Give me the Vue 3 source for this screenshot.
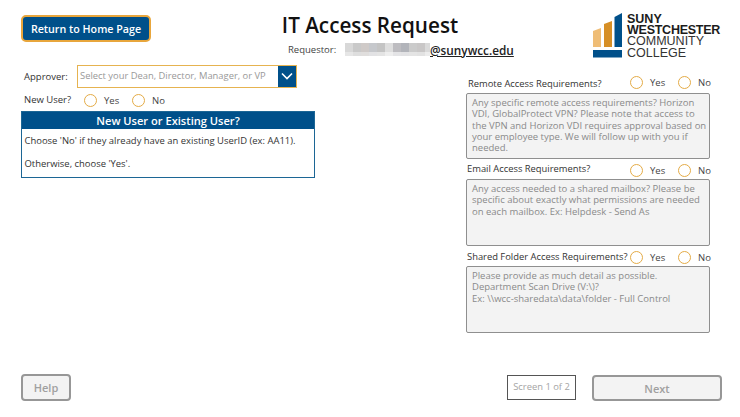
<script setup>
const blur = [
  ['#d8d8d8', 8], ['#c9c9c9', 8], ['#cfcac8', 8], ['#c6c8cc', 8], ['#c4c4c4', 8], ['#dedede', 8],
  ['#bdbcc0', 8], ['#b2b4ba', 8], ['#cbcbcb', 8], ['#c9c7c7', 8], ['#dadada', 5]
]
const blur2 = ['#e6e6e6', '#dedede', '#e0dedd', '#e2e2e4', '#e4e4e4', '#eeeeee', '#e4e4e6', '#e2e2e4', '#e4e4e4', '#e2e2e2', '#ececec']
const fields = [
  { label: 'Remote Access Requirements?', cls: 'f1', text: 'Any specific remote access requirements? Horizon VDI, GlobalProtect VPN? Please note that access to the VPN and Horizon VDI requires approval based on your employee type. We will follow up with you if needed.' },
  { label: 'Email Access Requirements?', cls: 'f2', text: 'Any access needed to a shared mailbox? Please be specific about exactly what permissions are needed on each mailbox. Ex: Helpdesk - Send As' },
  { label: 'Shared Folder Access Requirements?', cls: 'f3', text: 'Please provide as much detail as possible.\nDepartment Scan Drive (V:\\)?\nEx: \\\\wcc-sharedata\\data\\folder - Full Control' }
]
</script>

<template>
  <div class="page">
    <header class="header">
      <div class="head-left">
        <button class="home">Return to Home Page</button>
      </div>
      <div class="head-mid">
        <h1>IT Access Request</h1>
        <div class="req">
          <span class="req-label">Requestor:</span>
          <span class="pixels">
            <span class="px-row"><i v-for="(b, i) in blur" :key="i" :style="{ background: b[0], width: b[1] + 'px' }"></i></span>
            <span class="px-row low"><i v-for="(c, i) in blur2" :key="i" :style="{ background: c, width: blur[i][1] + 'px' }"></i></span>
          </span>
          <span class="email">@sunywcc.edu</span>
        </div>
      </div>
      <div class="head-right">
        <div class="logo">
          <svg width="29" height="45" viewBox="0 0 29 45">
            <polygon points="0,18 8,15 8,34 0,34" fill="#efbd76" />
            <polygon points="11,11 19,8 19,34 11,34" fill="#d68f26" />
            <polygon points="21.5,4 29,0 29,34 21.5,34" fill="#00508a" />
            <rect x="0" y="37" width="29" height="7.5" fill="#00508a" />
          </svg>
          <div class="logo-text">
            <span class="lb">SUNY</span>
            <span class="lb west">WESTCHESTER</span>
            <span class="ll">COMMUNITY</span>
            <span class="ll">COLLEGE</span>
          </div>
        </div>
      </div>
    </header>

    <main class="main">
      <section class="left">
        <div class="approver">
          <span class="approver-label">Approver:</span>
          <div class="select">
            <span class="select-text">Select your Dean, Director, Manager, or VP</span>
            <span class="select-btn">
              <svg width="14" height="9" viewBox="0 0 14 9"><path d="M2 1.5 L7 6.5 L12 1.5" fill="none" stroke="#fff" stroke-width="1.6" /></svg>
            </span>
          </div>
        </div>
        <div class="newuser">
          <span class="newuser-label">New User?</span>
          <span class="radio"></span><span class="opt yes">Yes</span>
          <span class="radio"></span><span class="opt">No</span>
        </div>
        <div class="panel">
          <div class="panel-head">New User or Existing User?</div>
          <div class="panel-body">
            <p>Choose 'No' if they already have an existing UserID (ex: AA11).</p>
            <p>Otherwise, choose 'Yes'.</p>
          </div>
        </div>
      </section>

      <section class="right">
        <div v-for="f in fields" :key="f.label" class="field" :class="f.cls">
          <div class="field-row">
            <span class="field-label">{{ f.label }}</span>
            <span class="field-radios">
              <span class="radio"></span><span class="opt yes-r">Yes</span>
              <span class="radio"></span><span class="opt">No</span>
            </span>
          </div>
          <div class="area">{{ f.text }}</div>
        </div>
      </section>
    </main>

    <footer class="footer">
      <button class="ghost help">Help</button>
      <div class="foot-right">
        <div class="screen">Screen 1 of 2</div>
        <button class="ghost next">Next</button>
      </div>
    </footer>
  </div>
</template>

<style>
html, body { margin: 0; background: #fff; }
</style>

<style scoped>
.page {
  width: 740px;
  height: 417px;
  display: flex;
  flex-direction: column;
  overflow: hidden;
  font-family: "Open Sans", "Noto Sans", sans-serif;
  color: #333;
  background: #fff;
}
.header {
  display: grid;
  grid-template-columns: 1fr 290px 1fr;
  height: 65px;
  box-sizing: border-box;
  padding: 13px 19px 0 21px;
  flex: none;
}
.home {
  width: 130px;
  height: 27px;
  margin-top: 2px;
  box-sizing: border-box;
  border: 2px solid #e8a63c;
  border-radius: 5px;
  background: #00508a;
  color: #fff;
  font: 600 10.7px "Open Sans", sans-serif;
  padding: 1px 0 0;
}
.head-mid { display: flex; flex-direction: column; align-items: center; }
h1 {
  margin: 0 2px 0 0;
  font-size: 20.7px;
  line-height: 24px;
  font-weight: 600;
  color: #111;
  white-space: nowrap;
}
.req {
  display: flex;
  align-items: center;
  height: 17px;
  margin-top: 4px;
  align-self: flex-start;
  margin-left: 62px;
}
.req-label { font-size: 9.5px; width: 57px; color: #444; flex: none; }
.pixels { display: flex; flex-direction: column; width: 85px; flex: none; }
.px-row { display: flex; height: 9px; }
.px-row.low { height: 4px; }
.px-row i { display: block; flex: none; }
.email {
  font-size: 11.8px;
  font-weight: 600;
  color: #222;
  text-decoration: underline;
  white-space: nowrap;
}
.head-right { display: flex; justify-content: flex-end; }
.logo { display: flex; gap: 5px; align-items: flex-start; height: 45px; }
.logo-text {
  display: flex;
  flex-direction: column;
  margin-top: 0.5px;
  font-family: "Liberation Sans", sans-serif;
  font-size: 12.5px;
  line-height: 11.4px;
  width: 94px;
  white-space: nowrap;
}
.lb { font-weight: 700; color: #1c1c1c; }
.west { letter-spacing: -0.25px; }
.ll { font-weight: 400; color: #333; }

.main {
  flex: 1;
  display: flex;
  justify-content: space-between;
  padding: 0 30px 0 21px;
  min-height: 0;
}
.left { width: 294px; }
.approver { display: flex; align-items: center; height: 23px; }
.approver-label { width: 56px; padding-left: 3px; box-sizing: border-box; font-size: 9.5px; color: #333; }
.select {
  width: 220px;
  height: 23px;
  box-sizing: border-box;
  border: 1.5px solid #e6b350;
  display: flex;
  align-items: stretch;
  background: #fff;
}
.select-text { flex: 1; padding-left: 2px; font-size: 9.4px; line-height: 20px; color: #999; white-space: nowrap; }
.select-btn {
  width: 18px;
  background: #00508a;
  display: flex;
  align-items: center;
  justify-content: center;
}
.newuser { display: flex; align-items: center; height: 14px; margin-top: 5px; padding-left: 3px; }
.newuser-label { width: 60px; font-size: 9.5px; position: relative; top: -1px; }
.radio {
  flex: none;
  width: 13px;
  height: 13px;
  box-sizing: border-box;
  border: 1.3px solid #e4ab46;
  border-radius: 50%;
  background: #fff;
}
.opt { font-size: 9.5px; color: #444; margin-left: 7px; }
.yes { width: 28px; }
.panel {
  margin-top: 4px;
  width: 294px;
  height: 67px;
  box-sizing: border-box;
  border: 1px solid #1c6695;
  background: #fff;
}
.panel-head {
  height: 17px;
  background: #00508a;
  color: #fff;
  text-align: center;
  font-size: 11.1px;
  font-weight: 600;
  line-height: 17px;
}
.panel-body { padding: 5px 2.5px; font-size: 9.45px; color: #333; }
.panel-body p { margin: 0 0 10px; line-height: 13px; white-space: nowrap; }

.right { width: 244px; display: flex; flex-direction: column; margin-top: 11px; }
.field { display: flex; flex-direction: column; }
.field-row { display: flex; height: 17px; align-items: center; position: relative; padding-left: 1px; }
.f1 .field-row { padding-left: 2px; }
.f1 .field-label { position: relative; top: -1px; }
.f2 .field-label { position: relative; top: -2px; }
.f3 .field-label { position: relative; top: -1px; }
.field-label { font-size: 9.4px; color: #333; white-space: nowrap; }
.field-radios {
  position: absolute;
  left: 164px;
  top: 0;
  display: flex;
  align-items: center;
  height: 13px;
}
.f2 .field-radios, .f3 .field-radios { top: 2px; }
.yes-r { width: 28px; }
.f1 .area { height: 66px; }
.area {
  width: 244px;
  height: 67px;
  box-sizing: border-box;
  border: 1.5px solid #8f8f8f;
  border-radius: 2px;
  background: #f3f3f3;
  padding: 3px 1px 3px 5px;
  font-size: 9.5px;
  line-height: 11.25px;
  color: #8a8a8a;
  white-space: pre-line;
}
.f2, .f3 { margin-top: 3px; }

.footer {
  flex: none;
  display: flex;
  justify-content: space-between;
  align-items: flex-start;
  height: 42px;
  box-sizing: border-box;
  padding: 0 18px 0 21px;
}
.foot-right { display: flex; gap: 16px; }
.ghost {
  box-sizing: border-box;
  height: 26px;
  border: 2px solid #979797;
  border-radius: 4px;
  background: #f3f3f3;
  color: #a0a0a0;
  font: 600 11px "Open Sans", sans-serif;
  padding: 0;
}
.help { width: 50px; height: 27px; margin-top: -1px; }
.next { width: 130px; }
.screen {
  width: 69px;
  height: 25px;
  box-sizing: border-box;
  border: 1.5px solid #555;
  text-align: center;
  font-size: 9.4px;
  line-height: 22px;
  color: #a5a5a5;
}
</style>
